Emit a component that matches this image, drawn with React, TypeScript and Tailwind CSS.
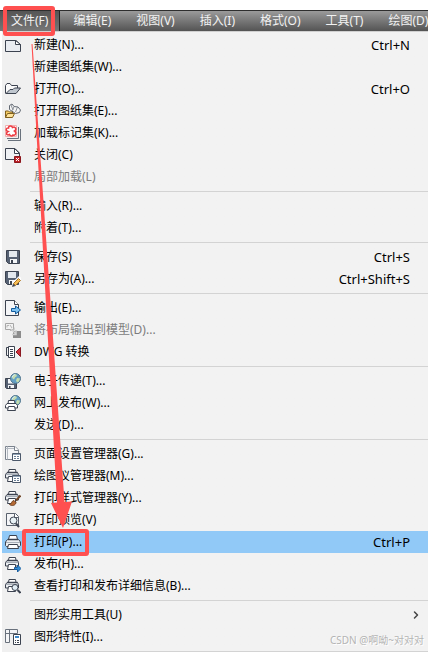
import React from "react";
import { ChevronRight } from "lucide-react";

interface MenuEntry {
  label: string;
  icon?: React.ReactNode;
  shortcut?: string;
  disabled?: boolean;
  active?: boolean;
  submenu?: boolean;
}

const INK = "#3c4350";

const Svg: React.FC<{ children: React.ReactNode }> = ({ children }) => (
  <svg viewBox="0 0 16 16" width="16" height="16" fill="none" stroke={INK} aria-hidden="true">
    {children}
  </svg>
);

/* Shared pieces of the toolbar icons */

const Floppy = () => (
  <>
    <path d="M1.5 1.5h13v13h-11l-2-2z" fill="#566173" />
    <path d="M4 2h8v6h-8z" fill="#e3e8ee" stroke="none" />
    <path d="M5 10h7v4h-7z" fill="#f4f6f8" stroke="none" />
    <path d="M6 11h2v3h-2z" fill={INK} stroke="none" />
  </>
);

const Printer = () => (
  <>
    <path d="M3.500 5.500l1-4h7l1 4" fill="#fff" />
    <path d="M2.500 5.500h11l2 2.500v3.500l-1 1h-13l-1-1V8z" fill="#eceff2" />
    <path d="M3 5.500h10" strokeWidth="1.500" />
    <path d="M1 8.500h14" stroke="#a9b0b9" />
    <path d="M3.500 10.500h9l1 4h-11z" fill="#fff" />
  </>
);

const SmallPrinter = () => (
  <>
    <path d="M3.500 4.500l.5-3h6.500l.5 3" fill="#fff" />
    <path d="M2 4.500h10.500l1 2v3.500h-13V6.500z" fill="#eceff2" />
    <path d="M2 4.500h10.500" strokeWidth="1.500" />
    <path d="M1 6.500h12" stroke="#a9b0b9" />
    <path d="M3.500 8.500h7v5h-8z" fill="#fff" />
  </>
);

const Globe = () => (
  <>
    <circle cx="10.500" cy="5.500" r="5" fill="#63a0c4" stroke="#50758c" />
    <path d="M8 2l3-1 1 2-2 1.500-1 2-2-1.500zM12 5l3 .5-1 3-2 1-1-2z" fill="#c3dcae" stroke="none" />
    <path d="M7 4.500a4 4 0 0 1 3-3" stroke="#d6edf6" />
  </>
);

const Dialog = () => (
  <>
    <path d="M7.500 7.500h8v7h-8z" fill="#fff" stroke="#4c596b" />
    <path d="M8 8.500h7" stroke="#8fa3b8" />
    <path d="M9 10.500h2M12 10.500h2M9 12.500h2M12 12.500h2" stroke="#6b7f96" />
  </>
);

const Lens = () => (
  <>
    <circle cx="10" cy="9.500" r="3" fill="#e2eef5" />
    <path d="M12.500 12l3 3" strokeWidth="2" />
  </>
);

const NewIcon = () => (
  <Svg>
    <path d="M.5 3.500H11l4.500 4v7H.5z" fill="#e9ecf1" />
    <path d="M10.500 3.500v4h5z" fill="#fff" />
  </Svg>
);

const OpenIcon = () => (
  <Svg>
    <path d="M.5 12.500v-8l1.500-2h3l1.500 2h6v3" fill="#fafafa" />
    <path d="M1 12.500l4-4h3l1.500-1.500h6l-4.500 5.500z" fill="#bfc6ce" />
  </Svg>
);

const OpenSheetIcon = () => (
  <Svg>
    <path d="M4.500 2.500l2.500-1.500 2 2.500 4 .5 2.500 3-1 2.500-4 1-6-4z" fill="#f5f5f5" stroke="#626973" />
    <path d="M6 2l2 5M9 3.500l-1.500 4M12.500 4l-2 5" stroke="#8b9199" />
    <path d="M.5 14.500v-6.500h3l1 1h3v2" fill="#f6cd63" stroke="#80601f" />
    <path d="M.5 14.500l2-4h7l-2 4z" fill="#ffe398" stroke="#80601f" />
  </Svg>
);

const MarkupIcon = () => (
  <Svg>
    <path d="M3 15.500h12.500V4M2 13.500h11.500V2" stroke="#69717c" />
    <path d="M.5 .5h11v11H.5z" fill="#fff" stroke="#efb0b0" />
    <path
      d="M3 6.500C.5 6 .8 2.500 3.500 3c0-3 3.500-2.500 4-.5 3-1.500 4.500 2 2 3.500 2.500 1.500 1 5-1.500 4-1 1.500-3 1-3.500-.5C1.500 11 .5 8 3 6.500z"
      fill="#fff"
      stroke="#ed3b42"
      strokeWidth="1.500"
    />
  </Svg>
);

const CloseIcon = () => (
  <Svg>
    <path d="M.5 1.500H10l4.500 4.500v6.500H.5z" fill="#eff1f4" />
    <path d="M9.500 1.500v5h5z" fill="#fff" />
    <path d="M9.500 9.500h6v6h-6z" fill="#bd2128" stroke="#8c171d" />
    <path d="M11 11l3 3M14 11l-3 3" stroke="#fff" />
  </Svg>
);

const SaveIcon = () => (
  <Svg>
    <Floppy />
  </Svg>
);

const SaveAsIcon = () => (
  <Svg>
    <g transform="translate(-1 -1)">
      <Floppy />
    </g>
    <path d="M7 15.500l1-4 6-6 2.500 2.500-6 6z" fill="#fff" stroke="#fff" />
    <path d="M8.500 12.500l5-5 2 2-5 5z" fill="#f7bd55" stroke="#a87426" />
    <path d="M7 16l1-3.500 2.500 2.500z" fill={INK} stroke="none" />
  </Svg>
);

const ExportIcon = () => (
  <Svg>
    <path d="M.5 .5h9l4 4v11H.5z" fill="#f4f5f7" />
    <path d="M9.500 .5v4h4" fill="#fff" />
    <path d="M6.500 8.500h4v-2.500l5 4-5 4v-2.500h-4z" fill="#7cc2f2" stroke="#125a9c" />
  </Svg>
);

const LayoutIcon = () => (
  <Svg>
    <path d="M.5 1.500h8v6h-8z" fill="#f2f2f2" stroke="#a6a6a6" />
    <path d="M2 5.500V3.500h2M5 3l2 3" stroke="#b5b5b5" />
    <path d="M8 9h8v7H8z" fill="#8c8c8c" stroke="none" />
    <path d="M5 8.500h4v-3" stroke="#b8b8b8" />
    <path d="M6 7l5 5M11 8v4.500H7" stroke="#d2d2d2" strokeWidth="1.500" />
  </Svg>
);

const ConvertIcon = () => (
  <Svg>
    <path d="M3 3.500H1.500v8H3" />
    <path d="M3.500 2.500h6v11h-6z" fill="#fff" />
    <path d="M5 5.500h3M5 7.500h3M5 9.500h3M5 11.500h3" />
    <path d="M15.500 3.500v9L11 8z" fill="#d0303b" stroke="#8a1821" />
  </Svg>
);

const TransmitIcon = () => (
  <Svg>
    <path d="M.5 5.500h11v10h-10l-1-1z" fill="#566173" />
    <path d="M3 6h6v4.500H3zM3 12h6v3H3z" fill="#f4f6f8" stroke="none" />
    <path d="M4 13h1.500v2H4z" fill={INK} stroke="none" />
    <Globe />
  </Svg>
);

const WebPublishIcon = () => (
  <Svg>
    <Globe />
    <path d="M3 9l.5-3.500h6L10 9" fill="#fff" />
    <path d="M2 8.500h9l1.500 2V13H.5v-2.500z" fill="#fff" />
    <path d="M3.500 11.500h6l1 4h-8z" fill="#fff" />
  </Svg>
);

const PageSetupIcon = () => (
  <Svg>
    <path d="M.5 .5H10l3.500 3.500v9.500H.5z" fill="#f5f6f8" stroke="#7b838e" />
    <path d="M2.500 .5v13M.5 2.500H10" stroke="#b3b9c1" />
    <path d="M9.500 .5v4h4" fill="#fff" stroke="#7b838e" />
    <Dialog />
  </Svg>
);

const PlotterIcon = () => (
  <Svg>
    <SmallPrinter />
    <Dialog />
  </Svg>
);

const PlotStyleIcon = () => (
  <Svg>
    <SmallPrinter />
    <path d="M15.500 5.500l-4.500 5" stroke="#704526" strokeWidth="2" />
    <path d="M4.500 14.500c2 0 2-4 4.500-4l2 2c-.5 3-4 4-6.500 2z" fill="#b66a34" stroke="#704526" />
  </Svg>
);

const PreviewIcon = () => (
  <Svg>
    <path d="M1.500 1.500h9l3 3v9h-12z" fill="#f5f6f8" stroke="#59616d" />
    <path d="M9.500 1.500v4h4" fill="#fff" stroke="#59616d" />
    <circle cx="8.500" cy="8.500" r="3.500" fill="#e8f2f6" />
    <path d="M11 11.500l3 3.500" strokeWidth="2" />
  </Svg>
);

const PrintIcon = () => (
  <Svg>
    <Printer />
  </Svg>
);

const PublishIcon = () => (
  <Svg>
    <SmallPrinter />
    <path d="M9.500 11.500h3V9l3.500 3.500-3.500 3.500v-2.500h-3z" fill="#318cd6" stroke="#1a5c9c" />
  </Svg>
);

const DetailsIcon = () => (
  <Svg>
    <SmallPrinter />
    <Lens />
  </Svg>
);

const PropertiesIcon = () => (
  <Svg>
    <path d="M.5 .5h12v4h-8v9h-4z" fill="#f4f5f7" stroke="#69717c" />
    <path d="M.5 4.500h5M4.500 .5v4" stroke="#69717c" />
    <path d="M8.500 5.500h7v10h-7z" fill="#fff" />
    <path d="M10 8h4" stroke="#3d86c6" strokeWidth="2" />
    <path d="M10 11.500h1M12 11.500h2M10 13.500h1M12 13.500h2" />
  </Svg>
);

const tabs = ["文件(F)", "编辑(E)", "视图(V)", "插入(I)", "格式(O)", "工具(T)", "绘图(D)"];

const groups: MenuEntry[][] = [
  [
    { label: "新建(N)...", icon: <NewIcon />, shortcut: "Ctrl+N" },
    { label: "新建图纸集(W)..." },
    { label: "打开(O)...", icon: <OpenIcon />, shortcut: "Ctrl+O" },
    { label: "打开图纸集(E)...", icon: <OpenSheetIcon /> },
    { label: "加载标记集(K)...", icon: <MarkupIcon /> },
    { label: "关闭(C)", icon: <CloseIcon /> },
    { label: "局部加载(L)", disabled: true },
  ],
  [{ label: "输入(R)..." }, { label: "附着(T)..." }],
  [
    { label: "保存(S)", icon: <SaveIcon />, shortcut: "Ctrl+S" },
    { label: "另存为(A)...", icon: <SaveAsIcon />, shortcut: "Ctrl+Shift+S" },
  ],
  [
    { label: "输出(E)...", icon: <ExportIcon /> },
    { label: "将布局输出到模型(D)...", icon: <LayoutIcon />, disabled: true },
    { label: "DWG 转换", icon: <ConvertIcon /> },
  ],
  [
    { label: "电子传递(T)...", icon: <TransmitIcon /> },
    { label: "网上发布(W)...", icon: <WebPublishIcon /> },
    { label: "发送(D)..." },
  ],
  [
    { label: "页面设置管理器(G)...", icon: <PageSetupIcon /> },
    { label: "绘图仪管理器(M)...", icon: <PlotterIcon /> },
    { label: "打印样式管理器(Y)...", icon: <PlotStyleIcon /> },
    { label: "打印预览(V)", icon: <PreviewIcon /> },
    { label: "打印(P)...", icon: <PrintIcon />, shortcut: "Ctrl+P", active: true },
    { label: "发布(H)...", icon: <PublishIcon /> },
    { label: "查看打印和发布详细信息(B)...", icon: <DetailsIcon /> },
  ],
  [
    { label: "图形实用工具(U)", submenu: true },
    { label: "图形特性(I)...", icon: <PropertiesIcon /> },
  ],
];

const MenuRow: React.FC<{ entry: MenuEntry }> = ({ entry }) => (
  <button
    type="button"
    disabled={entry.disabled}
    className={`flex h-[22px] w-full items-center pl-[3px] pr-[6px] text-left ${
      entry.active ? "bg-[#91c9f7]" : ""
    } ${entry.disabled ? "text-[#7c7c7c]" : "text-black"}`}
  >
    <span className="mr-[13px] h-4 w-4 shrink-0">{entry.icon}</span>
    <span className="whitespace-nowrap">{entry.label}</span>
    {entry.shortcut && <span className="ml-auto mr-3 text-[13px]">{entry.shortcut}</span>}
    {entry.submenu && <ChevronRight size={12} strokeWidth={3} className="ml-auto text-[#444]" />}
  </button>
);

export default function App() {
  return (
    <div className="relative min-h-screen overflow-hidden bg-white pt-[10px] font-['Noto_Sans','Noto_Sans_CJK_SC',sans-serif] text-[12px] leading-4">
      {/* Menu bar */}
      <nav className="flex h-[21px] gap-px overflow-hidden border-t border-[#2e2e2e] bg-linear-to-b from-[#9b9b9b] to-[#545454] text-[#f2f2f2]">
        {tabs.map((tab, i) => (
          <button
            key={tab}
            type="button"
            className={`shrink-0 whitespace-nowrap px-3 ${
              i === 0 ? "border-r border-[#262626] bg-linear-to-b from-[#555] to-[#777] pl-[11px] pr-[11px]" : ""
            }`}
          >
            {tab}
          </button>
        ))}
      </nav>

      {/* File menu */}
      <div className="ml-[2px] border-t border-[#d0d0d0] bg-linear-to-r from-[#f0f0f0] from-[28px] to-[#f2f2f2] to-[28px] pt-[2px]">
        {groups.map((group, i) => (
          <React.Fragment key={i}>
            {group.map((entry) => (
              <MenuRow key={entry.label} entry={entry} />
            ))}
            <hr
              className={`ml-7 mt-[3px] border-[#d3d3d3] ${i === groups.length - 1 ? "" : "mb-[3px]"}`}
            />
          </React.Fragment>
        ))}
      </div>

      {/* Red guide marks */}
      <svg
        className="pointer-events-none absolute left-0 top-0"
        width="428"
        height="652"
        viewBox="0 0 428 652"
        fill="none"
        aria-hidden="true"
      >
        <rect x="5" y="8" width="48" height="26" rx="1" stroke="#ff5050" strokeWidth="4" />
        <rect x="24" y="531" width="63" height="23" rx="1" stroke="#ff5050" strokeWidth="4" />
        <path d="M31.500 44h1L64.500 502 72 501.500 63 528 51 503l6-.5z" fill="#ff5050" />
      </svg>

      <p className="absolute bottom-1 right-1 whitespace-nowrap text-[10px] text-[#b4b4b4] [text-shadow:1px_1px_0_#fff]">
        CSDN @啊呦~对对对
      </p>
    </div>
  );
}
